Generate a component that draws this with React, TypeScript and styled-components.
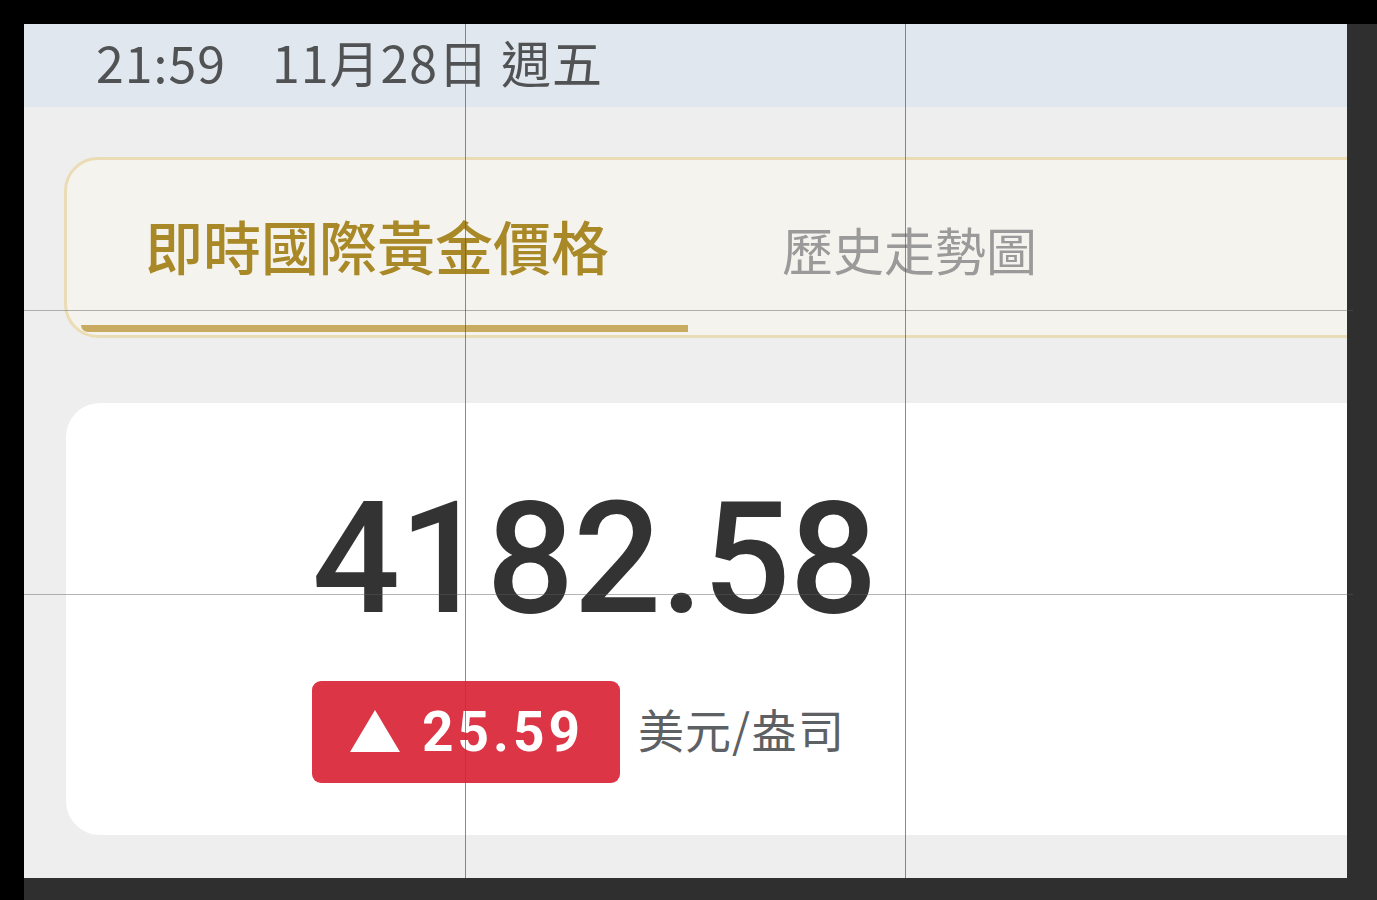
import * as React from "react"
import styled, { createGlobalStyle } from "styled-components"

const GlobalStyle = createGlobalStyle`
  html, body {
    margin: 0;
    padding: 0;
    background: #2f2f2f;
    overflow: hidden;
  }
`

const cjk = `"Noto Sans CJK TC", "Noto Sans", sans-serif`

const App = () => (
  <Page>
    <GlobalStyle />
    <TopEdge />
    <Middle>
      <LeftEdge />
      <Screen>
        <StatusBar>
          <Clock>21:59</Clock>
          <DateText>11月28日 週五</DateText>
        </StatusBar>
        <Content>
          <TabCard>
            <Tab active>
              <TabLabel active>即時國際黃金價格</TabLabel>
              <Indicator />
            </Tab>
            <Tab>
              <TabLabel>歷史走勢圖</TabLabel>
            </Tab>
          </TabCard>
          <PriceCard>
            <Price>4182.58</Price>
            <ChangeRow>
              <ChangeBadge>
                <Arrow viewBox="0 0 50 42">
                  <polygon points="25,0 50,42 0,42" fill="#ffffff" />
                </Arrow>
                <ChangeValue>25.59</ChangeValue>
              </ChangeBadge>
              <Unit>美元/盎司</Unit>
            </ChangeRow>
          </PriceCard>
        </Content>
      </Screen>
    </Middle>
    <GuideV style={{ left: 465 }} />
    <GuideV style={{ left: 905 }} />
    <GuideH style={{ top: 310 }} />
    <GuideH style={{ top: 594 }} />
  </Page>
)

export default App

const Page = styled.div`
  position: relative;
  width: 1377px;
  height: 900px;
  background: #2f2f2f;
  overflow: hidden;
`

const TopEdge = styled.div`
  height: 24px;
  background: #000000;
`

const Middle = styled.div`
  display: flex;
  height: 854px;
`

const LeftEdge = styled.div`
  width: 24px;
  height: 876px;
  background: #000000;
`

const Screen = styled.div`
  width: 1323px;
  height: 854px;
  background: #eeeeee;
  overflow: hidden;
  display: flex;
  flex-direction: column;
`

const StatusBar = styled.div`
  height: 83px;
  flex-shrink: 0;
  background: #e1e7ef;
  display: flex;
  align-items: center;
  gap: 46px;
  padding: 0 0 10px 72px;
  box-sizing: border-box;
  color: #505254;
  font-family: ${cjk};
  font-size: 50px;
  line-height: 1;
`

const Clock = styled.span`
  letter-spacing: 1px;
`

const DateText = styled.span`
  letter-spacing: 1px;
`

const Content = styled.div`
  display: flex;
  flex-direction: column;
  padding: 50px 0 0 40px;
  gap: 65px;
`

const TabCard = styled.div`
  display: flex;
  width: 1400px;
  height: 181px;
  box-sizing: border-box;
  border: 3px solid #eadcb4;
  border-radius: 34px;
  background: #f5f3ed;
  overflow: hidden;
`

const Tab = styled.div<{ active?: boolean }>`
  width: ${(p) => (p.active ? "621px" : "auto")};
  display: flex;
  flex-direction: column;
  padding-left: ${(p) => (p.active ? "0" : "94px")};
`

const TabLabel = styled.div<{ active?: boolean }>`
  flex: 1;
  display: flex;
  align-items: center;
  padding-left: ${(p) => (p.active ? "78px" : "0")};
  padding-top: ${(p) => (p.active ? "4px" : "2px")};
  font-family: ${cjk};
  font-size: ${(p) => (p.active ? "58px" : "51px")};
  font-weight: ${(p) => (p.active ? 500 : 400)};
  color: ${(p) => (p.active ? "#a98827" : "#9a9a9a")};
`

const Indicator = styled.div`
  height: 7px;
  margin: 0 0 3px 14px;
  background: #c8aa60;
  border-radius: 0 0 0 8px;
`

const PriceCard = styled.div`
  width: 1400px;
  height: 432px;
  background: #ffffff;
  border-radius: 34px;
  margin-left: 2px;
  padding: 78px 0 0 246px;
  box-sizing: border-box;
`

const Price = styled.div`
  font-family: Roboto, sans-serif;
  font-weight: 500;
  font-size: 155px;
  line-height: 156px;
  color: #333333;
  letter-spacing: -1px;
`

const ChangeRow = styled.div`
  display: flex;
  align-items: center;
  gap: 18px;
  margin-top: 44px;
`

const ChangeBadge = styled.div`
  width: 308px;
  height: 102px;
  box-sizing: border-box;
  background: #dc3545;
  border-radius: 9px;
  display: flex;
  align-items: center;
  gap: 22px;
  padding-left: 38px;
`

const Arrow = styled.svg`
  width: 50px;
  height: 42px;
  margin-top: -2px;
`

const ChangeValue = styled.span`
  font-family: Roboto, sans-serif;
  font-weight: 700;
  font-size: 55px;
  letter-spacing: 4px;
  color: #ffffff;
`

const Unit = styled.span`
  font-family: ${cjk};
  font-size: 46px;
  letter-spacing: 1px;
  color: #5e6164;
  margin-bottom: 9px;
`

const GuideV = styled.div`
  position: absolute;
  top: 24px;
  width: 1px;
  height: 854px;
  background: rgba(90, 90, 90, 0.7);
`

const GuideH = styled.div`
  position: absolute;
  left: 24px;
  width: 1329px;
  height: 1px;
  background: rgba(90, 90, 90, 0.45);
`
